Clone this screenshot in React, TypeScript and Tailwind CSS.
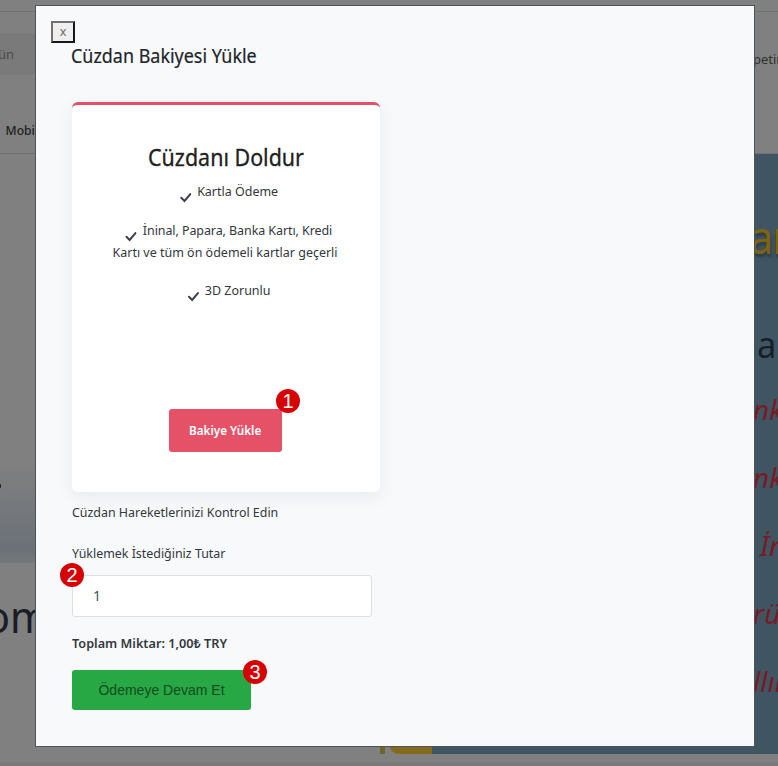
import type { ReactNode } from 'react';

function Check() {
  return (
    <svg width="12" height="11" viewBox="0 0 12 11" className="mr-[6px] inline-block shrink-0 translate-y-[5px]" fill="none">
      <path d="M1.3 5.8 4.6 8.9 10.7 2.1" stroke="#3b3f4c" strokeWidth="2.1" strokeLinecap="round" />
    </svg>
  );
}

function Badge({ children, place }: { children: ReactNode; place: string }) {
  return (
    <span className={`absolute flex h-6 w-6 items-center justify-center rounded-full bg-[#d60202] font-['Liberation_Sans',sans-serif] text-[20px] font-normal leading-6 text-white ${place}`}>
      {children}
    </span>
  );
}

function Backdrop() {
  return (
    <div className="flex h-[766px] w-[778px] flex-col bg-[#808080]">
      <div className="h-3 border-b border-[#727272]" />
      <div className="flex h-[142px] justify-between border-b border-[#707070]">
        <div className="w-9 overflow-hidden pt-[21px]">
          <div className="h-[42px] bg-[#7a7a7a] pt-[11px] text-[13px] leading-5 text-[#4b4b4b]"><span className="-ml-[2px]">ün</span></div>
          <div className="mt-[45px] w-max origin-left scale-x-[0.93] pl-[6px] text-[13px] font-medium leading-5 text-[#202020]">Mobil</div>
        </div>
        <div className="w-[25px] overflow-hidden whitespace-nowrap pt-[37px] text-[13px] leading-5 text-[#303030]">petim</div>
      </div>
      <div className="flex h-[600px] justify-between">
        <div className="w-9 overflow-hidden">
          <div className="h-[409px] bg-[linear-gradient(#808080_75%,#6b7178_97%,#76797c_100%)] pt-[329px]">
            <div className="-ml-[5px] h-[6px] w-[6px] rounded-full bg-[#16191f]" />
          </div>
          <div className="-ml-[15px] mt-[28px] w-max origin-left scale-x-[0.94] text-[44px] leading-[50px] text-[#191d25]">om</div>
        </div>
        <div className="flex w-[398px] items-end">
          <div className="h-[10px] w-[5px] bg-[#6e652c]" />
          <div className="ml-1 h-[10px] w-[43px] rounded-bl-full bg-[#836a1c]" />
          <div className="h-[600px] w-[346px] overflow-hidden whitespace-nowrap bg-[#3f5562] pl-[321px] pt-[51px] italic text-[#791b25]">
            <div className="-ml-[3px] h-[62px] w-max origin-left scale-x-[0.9] text-[46px] not-italic leading-[62px] tracking-tight text-[#80640c] [text-shadow:1px_3px_3px_#293a43]">ar</div>
            <div className="-ml-[5px] mt-[46px] h-[62px] w-max origin-left scale-x-[0.93] text-[37px] not-italic leading-[62px] text-[#142029]">la</div>
            <div className="mt-[3px] h-[62px] text-[28px] leading-[62px]">nka</div>
            <div className="mt-[6px] h-[62px] text-[28px] leading-[62px]">nka</div>
            <div className="mt-[6px] h-[62px] pl-[7px] text-[28px] leading-[62px]">İn</div>
            <div className="mt-[6px] h-[62px] text-[28px] leading-[62px]">rün</div>
            <div className="mt-[6px] h-[62px] text-[28px] leading-[62px]">llın</div>
          </div>
        </div>
      </div>
      <div className="mt-2 h-1 bg-[#7a7a7a]" />
    </div>
  );
}

export default function App() {
  return (
    <main className="relative h-[766px] w-[778px] overflow-hidden font-['Noto_Sans',sans-serif] text-[#33373d]">
      <Backdrop />
      <section className="absolute left-[35px] top-[5px] h-[742px] w-[720px] border border-[#505355] bg-[#f8f9fb] pl-[15px] pt-[15px]">
        <button className="block h-[22px] w-6 border-2 border-b-[#171717] border-l-[#717171] border-r-[#171717] border-t-[#717171] bg-[#efefef] text-[12.5px] leading-[16px] text-[#6a6a6a]">x</button>
        <div className="pl-[21px]">
          <h1 className="-ml-[1px] mt-[-2px] w-max origin-left scale-x-[0.93] text-[19.3px] leading-[30px] text-[#212529] [-webkit-text-stroke:0.2px_#212529]">Cüzdan Bakiyesi Yükle</h1>
          <div className="relative mt-[31px] h-[390px] w-[308px] rounded-[6px] border-t-[3px] border-[#df5269] bg-white pt-[34px] text-center shadow-[0_5px_16px_rgba(70,90,110,0.09)]">
            <h2 className="scale-x-[0.92] text-[23.3px] leading-[36px] text-[#212121] [-webkit-text-stroke:0.3px_#212121]">Cüzdanı Doldur</h2>
            <p className="mt-[5px] h-[22px] translate-x-[3px] scale-x-[0.96] whitespace-nowrap text-[13px] leading-[22px]"><Check />Kartla Ödeme</p>
            <div className="mt-[17px] h-[44px] scale-x-[0.96] whitespace-nowrap text-[13px] leading-[22px]">
              <p className="translate-x-[3px] tracking-[-0.08px]"><Check />İninal, Papara, Banka Kartı, Kredi</p>
              <p className="-translate-x-[1px]">Kartı ve tüm ön ödemeli kartlar geçerli</p>
            </div>
            <p className="mt-[16px] h-[22px] translate-x-[3px] scale-x-[0.96] whitespace-nowrap text-[13px] leading-[22px]"><Check />3D Zorunlu</p>
            <button className="relative ml-[97px] mt-[108px] block h-[43px] w-[113px] rounded-[3px] bg-[#e55268] text-[13px] font-semibold text-white">
              <span className="inline-block scale-x-[0.9] whitespace-nowrap">Bakiye Yükle</span>
              <Badge place="-right-[18px] -top-5">1</Badge>
            </button>
          </div>
          <p className="mt-[9px] w-max origin-left scale-x-[0.955] text-[13px] leading-[22px]">Cüzdan Hareketlerinizi Kontrol Edin</p>
          <label className="mt-[19px] block w-max origin-left scale-x-[0.955] text-[13px] leading-[22px]">Yüklemek İstediğiniz Tutar</label>
          <div className="relative mt-[11px] h-[42px] w-[300px] rounded-[3px] border border-[#dcdfe3] bg-white pl-[20px] text-[14px] leading-[40px] text-[#495057]">
            1
            <Badge place="-left-[13px] -top-[13px]">2</Badge>
          </div>
          <p className="mt-[15px] w-max origin-left scale-x-[0.975] text-[13px] font-semibold leading-[22px]">Toplam Miktar: 1,00₺ TRY</p>
          <button className="relative mt-[16px] block h-10 w-[179px] rounded-[3px] bg-[#28a745] font-['Liberation_Sans',sans-serif] text-[14px] text-[#124c20]">
            Ödemeye Devam Et
            <Badge place="-right-4 -top-[10px]">3</Badge>
          </button>
        </div>
      </section>
    </main>
  );
}
